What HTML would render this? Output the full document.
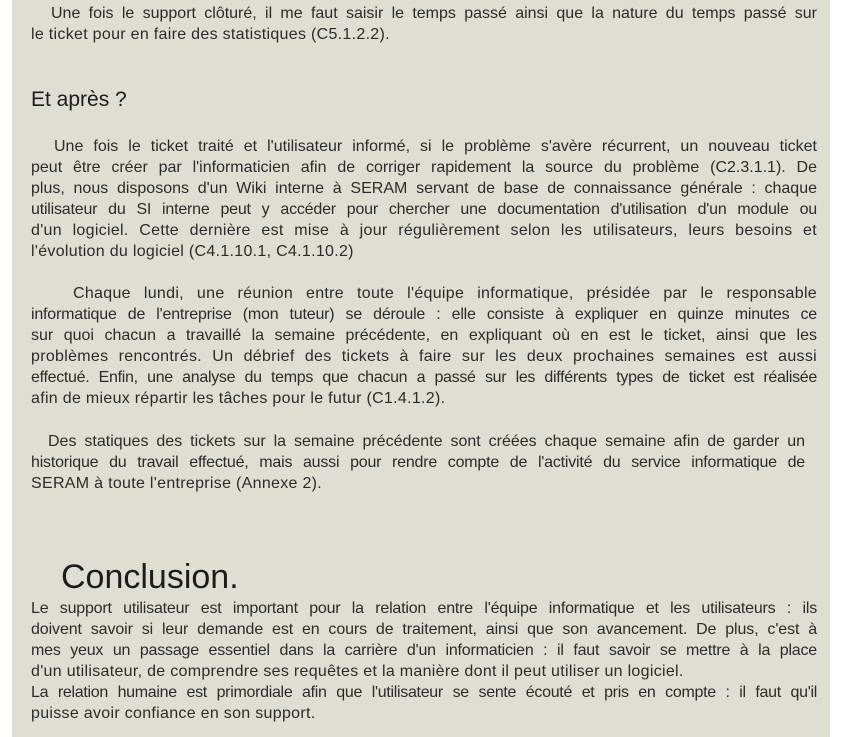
<!DOCTYPE html>
<html><head><meta charset="utf-8"><style>
html,body{margin:0;padding:0;background:#fff;width:844px;height:737px;overflow:hidden}
#p{position:absolute;left:12px;top:0;width:818px;height:737px;background:#e0ded2}
.l{position:absolute;left:31px;width:786px;font:16px/21px "Liberation Sans",sans-serif;color:#2b2b2b;white-space:nowrap;text-align:justify;text-align-last:justify;letter-spacing:0.3px}
.n{text-align:left;text-align-last:left}
.h{position:absolute;font-family:"Liberation Sans",sans-serif;color:#1c1c1c;white-space:nowrap}
</style></head><body><div id="p"></div>
<div class="l" style="top:3px;left:51px;width:766px;letter-spacing:0">Une fois le support clôturé, il me faut saisir le temps passé ainsi que la nature du temps passé sur</div>
<div class="l n" style="top:24px">le ticket pour en faire des statistiques (C5.1.2.2).</div>
<div class="h" style="left:31px;top:88px;font-size:21px">Et après ?</div>
<div class="l" style="top:136px;left:54px;width:763px;letter-spacing:0">Une fois le ticket traité et l'utilisateur informé, si le problème s'avère récurrent, un nouveau ticket</div>
<div class="l" style="top:157px;letter-spacing:0">peut être créer par l'informaticien afin de corriger rapidement la source du problème (C2.3.1.1). De</div>
<div class="l" style="top:178px;letter-spacing:0">plus, nous disposons d'un Wiki interne à SERAM servant de base de connaissance générale : chaque</div>
<div class="l" style="top:199px;letter-spacing:-0.2px">utilisateur du SI interne peut y accéder pour chercher une documentation d'utilisation d'un module ou</div>
<div class="l" style="top:220px">d'un logiciel. Cette dernière est mise à jour régulièrement selon les utilisateurs, leurs besoins et</div>
<div class="l n" style="top:241px">l'évolution du logiciel (C4.1.10.1, C4.1.10.2)</div>
<div class="l" style="top:283px;left:73px;width:744px">Chaque lundi, une réunion entre toute l'équipe informatique, présidée par le responsable</div>
<div class="l" style="top:304px;letter-spacing:-0.2px">informatique de l'entreprise (mon tuteur) se déroule : elle consiste à expliquer en quinze minutes ce</div>
<div class="l" style="top:325px;letter-spacing:0">sur quoi chacun a travaillé la semaine précédente, en expliquant où en est le ticket, ainsi que les</div>
<div class="l" style="top:346px">problèmes rencontrés. Un débrief des tickets à faire sur les deux prochaines semaines est aussi</div>
<div class="l" style="top:367px;letter-spacing:-0.3px">effectué. Enfin, une analyse du temps que chacun a passé sur les différents types de ticket est réalisée</div>
<div class="l n" style="top:388px">afin de mieux répartir les tâches pour le futur (C1.4.1.2).</div>
<div class="l" style="top:431px;left:48px;width:757px;letter-spacing:0">Des statiques des tickets sur la semaine précédente sont créées chaque semaine afin de garder un</div>
<div class="l" style="top:452px;width:774px;letter-spacing:-0.2px">historique du travail effectué, mais aussi pour rendre compte de l'activité du service informatique de</div>
<div class="l n" style="top:473px">SERAM à toute l'entreprise (Annexe 2).</div>
<div class="h" style="left:61px;top:558px;font-size:34px">Conclusion.</div>
<div class="l" style="top:598px;letter-spacing:-0.2px">Le support utilisateur est important pour la relation entre l'équipe informatique et les utilisateurs : ils</div>
<div class="l" style="top:619px;letter-spacing:-0.1px">doivent savoir si leur demande est en cours de traitement, ainsi que son avancement. De plus, c'est à</div>
<div class="l" style="top:640px;letter-spacing:-0.2px">mes yeux un passage essentiel dans la carrière d'un informaticien : il faut savoir se mettre à la place</div>
<div class="l n" style="top:661px">d'un utilisateur, de comprendre ses requêtes et la manière dont il peut utiliser un logiciel.</div>
<div class="l" style="top:682px;letter-spacing:-0.3px">La relation humaine est primordiale afin que l'utilisateur se sente écouté et pris en compte : il faut qu'il</div>
<div class="l n" style="top:703px">puisse avoir confiance en son support.</div>
</body></html>
